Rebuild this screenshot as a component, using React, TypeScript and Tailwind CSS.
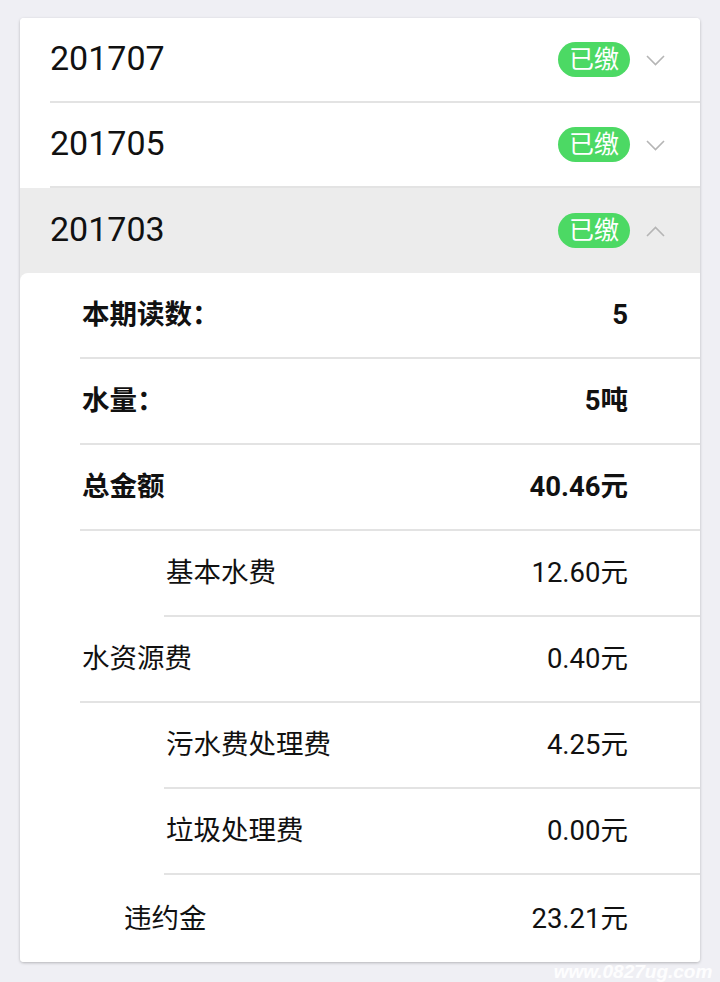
import React from "react";

const CJK = { fontFamily: 'Roboto, "Noto Sans CJK SC", sans-serif' };

function Chevron({ up }: { up?: boolean }) {
  return (
    <svg width="19" height="11" viewBox="0 0 19 11" className="block">
      <polyline
        points={up ? "1,10 9.5,1.5 18,10" : "1,1 9.5,9.5 18,1"}
        fill="none"
        stroke="#b5b5b5"
        strokeWidth="1.6"
      />
    </svg>
  );
}

function Header({ title, up, gray, divider }: { title: string; up?: boolean; gray?: boolean; divider?: boolean }) {
  return (
    <div className={gray ? "bg-[#ececec]" : "bg-white"}>
      <div
        className={
          "ml-[30px] h-[85px] flex items-center pr-[35px] " +
          (divider ? "border-b-2 border-[#e3e3e3]" : "")
        }
      >
        <div className="flex-1 text-[34px] text-[#111] leading-none mb-[4px]" style={CJK}>
          {title}
        </div>
        <div className="w-[72px] h-[35px] rounded-full bg-[#4cd964] text-white text-[25px] flex items-center justify-center leading-none">
          已缴
        </div>
        <div className="ml-[16px] mt-[2px]">
          <Chevron up={up} />
        </div>
      </div>
    </div>
  );
}

function Row({
  label,
  value,
  indent,
  bold,
  divider = true,
  last,
}: {
  label: string;
  value: string;
  indent: string;
  bold?: boolean;
  divider?: boolean;
  last?: boolean;
}) {
  return (
    <div
      className={
        indent +
        " flex items-center pr-[72px] " +
        (last ? "h-[87px] " : "h-[86px] ") +
        (divider ? "border-b-2 border-[#e3e3e3]" : "")
      }
    >
      <div className={"flex-1 pl-[2px] text-[27.5px] text-[#111] leading-none " + (bold ? "font-bold" : "")}>
        {label}
      </div>
      <div className={"text-[27.5px] text-[#111] leading-none " + (bold ? "font-bold" : "")}>{value}</div>
    </div>
  );
}

export default function App() {
  return (
    <div className="relative min-h-screen bg-[#efeff4] pt-[18px] px-[20px] pb-[20px]" style={CJK}>
      <div className="relative bg-white rounded-[4px] shadow-[0_1px_3px_rgba(0,0,0,0.25)] overflow-hidden">
        <Header title="201707" divider />
        <Header title="201705" divider />
        <Header title="201703" up gray />
        <div className="bg-[#ececec]">
          <div className="bg-white rounded-tl-[8px]">
            <Row label="本期读数：" value="5" indent="ml-[60px]" bold />
            <Row label="水量：" value="5吨" indent="ml-[60px]" bold />
            <Row label="总金额" value="40.46元" indent="ml-[60px]" bold />
            <Row label="基本水费" value="12.60元" indent="ml-[144px]" />
            <Row label="水资源费" value="0.40元" indent="ml-[60px]" />
            <Row label="污水费处理费" value="4.25元" indent="ml-[144px]" />
            <Row label="垃圾处理费" value="0.00元" indent="ml-[144px]" />
            <Row label="违约金" value="23.21元" indent="ml-[102px]" divider={false} last />
          </div>
        </div>
      </div>
      <div className="absolute left-[550px] top-[932px] w-[166px] flex flex-col items-center pointer-events-none">
        <div className="text-[26px] font-bold italic text-white/40 leading-none tracking-[4px]">游戏网</div>
        <div
          className="text-[19px] font-bold italic text-white/90 leading-none mt-[4px]"
          style={{ fontFamily: '"Liberation Sans", sans-serif' }}
        >
          www.0827ug.com
        </div>
      </div>
    </div>
  );
}
